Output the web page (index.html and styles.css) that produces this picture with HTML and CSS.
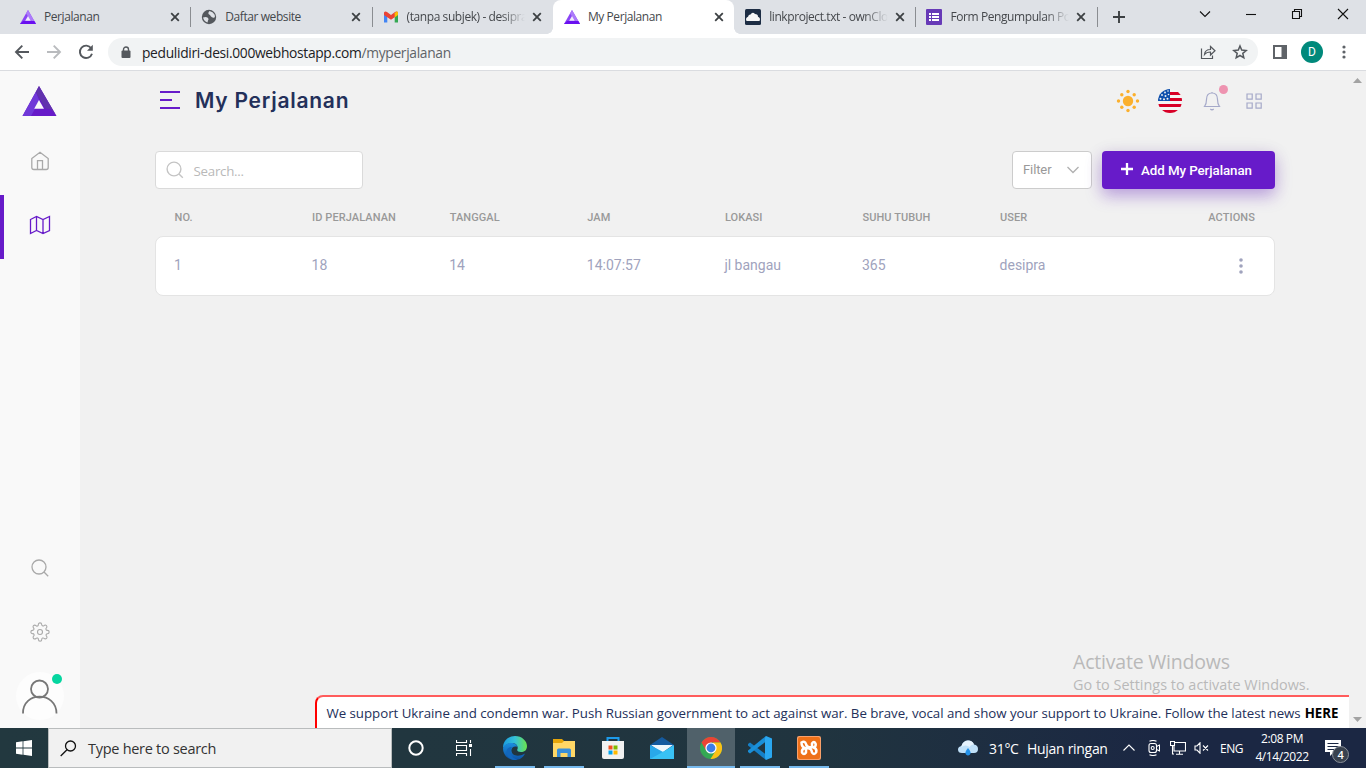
FILE: index.html
```html
<!DOCTYPE html>
<html lang="id">
<head>
<meta charset="utf-8">
<title>My Perjalanan</title>
<link rel="stylesheet" href="styles.css">
</head>
<body>
<svg width="0" height="0" class="defs">
  <defs>
    <symbol id="tri" viewBox="0 0 34 30"><path d="M16.500 0L34 30H0Z" fill="#671bc9"/><path d="M13.300 6L0 30H8.500L17 15Z" fill="#7038d8"/><path d="M16.500 0L34 30L29 23.500L22.500 22.500L13.300 6Z" fill="#6132ad"/><path d="M16.500 14L11.700 22.800H21.500Z" fill="#f9f9f9"/></symbol>
    <symbol id="tri-fav" viewBox="0 0 16 14"><path d="M8 0L16 14H0Z" fill="#8a45f5"/><path d="M8 0L16 14L10.500 10L6 3.500Z" fill="#ac7bfa"/><path d="M0 14L3 11H14.300L16 14Z" fill="#6a10f0"/><path d="M8 6L5.200 10.700H10.800Z" fill="#f1ecfb"/></symbol>
    <symbol id="x" viewBox="0 0 16 16"><path d="M4.200 4.200L11.800 11.800M11.800 4.200L4.200 11.800" stroke="#3c4043" stroke-width="1.800"/></symbol>
  </defs>
</svg>
<div class="screen">
  <header class="tabs">
    <div class="tab"><svg class="fav tri"><use href="#tri-fav"/></svg><span class="tab-title">Perjalanan</span><svg class="close"><use href="#x"/></svg></div>
    <div class="tab sep"><svg class="fav" viewBox="0 0 16 16"><circle cx="8" cy="8" r="7.200" fill="#54585d"/><path d="M2 8.500Q5 7.500 6.500 8.500Q8.500 10 7 11.500L6.500 13.500Q3 12.500 2 8.500ZM8.500 2Q6.500 4 8 5.500Q9.500 5.500 9.500 7Q11.500 9.500 13.500 8.500Q14.500 7.500 13.500 5.500Q12 2.500 8.500 2Z" fill="#dee1e6"/></svg><span class="tab-title">Daftar website</span><svg class="close"><use href="#x"/></svg></div>
    <div class="tab sep"><svg class="fav" viewBox="0 0 16 16"><path d="M1 4V13.500H4.300V7Z" fill="#4285f4"/><path d="M15 4V13.500H11.700V7Z" fill="#34a853"/><path d="M1 6V3.500Q2 2 4 3L8 6L12 3Q14 2 15 3.500L11.700 8.300L8 10.800L4.300 8.300Z" fill="#ea4335"/><path d="M11.700 4.200L13 2.700Q15 2.200 15 4V6L11.700 8.400Z" fill="#fbbc04"/></svg><span class="tab-title fade">(tanpa subjek) - desipra</span><svg class="close"><use href="#x"/></svg></div>
    <div class="tab active"><svg class="fav tri"><use href="#tri-fav"/></svg><span class="tab-title">My Perjalanan</span><svg class="close"><use href="#x"/></svg></div>
    <div class="tab"><svg class="fav" viewBox="0 0 16 16"><rect width="16" height="16" rx="1.500" fill="#1d2d44"/><path d="M1.500 12Q0 9 3 7.800Q3.500 5.500 5.500 5.500Q7.500 2.500 10 5Q13 5 13 7.800Q16 9 14.500 12Z" fill="#f7f7f7"/></svg><span class="tab-title fade">linkproject.txt - ownCloud</span><svg class="close"><use href="#x"/></svg></div>
    <div class="tab sep"><svg class="fav" viewBox="0 0 16 16"><rect width="16" height="16" rx="1" fill="#673ab7"/><path d="M3 4H5V6H3ZM3 7H5V9H3ZM3 10H5V12H3ZM6 4H13V6H6ZM6 7H13V9H6ZM6 10H13V12H6Z" fill="#fff"/></svg><span class="tab-title fade">Form Pengumpulan Portofolio</span><svg class="close"><use href="#x"/></svg></div>
    <div class="newtab sep"><svg width="14" height="14" viewBox="0 0 14 14"><path d="M7 1V13M1 7H13" stroke="#3c4043" stroke-width="1.900"/></svg></div>
    <div class="winbtns">
      <svg width="12" height="12" viewBox="0 0 12 12"><path d="M1 3.500L6 8.500L11 3.500"/></svg>
      <svg width="12" height="12" viewBox="0 0 12 12"><path d="M1 6.500H11"/></svg>
      <svg width="12" height="12" viewBox="0 0 12 12"><path d="M1.500 3.500H8.500V10.500H1.500ZM3.500 3.500V1.500H10.500V8.500H8.500"/></svg>
      <svg width="12" height="12" viewBox="0 0 12 12"><path d="M1 1L11 11M11 1L1 11"/></svg>
    </div>
  </header>
  <div class="toolbar">
    <svg width="16" height="16" viewBox="0 0 16 16" class="nav"><path d="M15 8H2M8.300 1.700L2 8L8.300 14.300"/></svg>
    <svg width="16" height="16" viewBox="0 0 16 16" class="nav off"><path d="M1 8H14M7.700 1.700L14 8L7.700 14.300"/></svg>
    <svg width="16" height="16" viewBox="0 0 16 16" class="nav"><path d="M13.200 4.300A6.200 6.200 0 1 0 14 9.800"/><path d="M14.800 .8V6.700H9Z" fill="#54585d" stroke="none"/></svg>
    <div class="omnibox">
      <svg width="10" height="13" viewBox="0 0 10 13"><rect x=".5" y="4.500" width="9" height="7.500" rx="1" fill="#54585d"/><path d="M2.500 5V3.500A2.500 2.500 0 0 1 7.500 3.500V5" fill="none" stroke="#54585d" stroke-width="1.400"/></svg>
      <span class="url">pedulidiri-desi.000webhostapp.com<span class="path">/myperjalanan</span></span>
      <svg width="16" height="16" viewBox="0 0 16 16" class="line"><path d="M1.500 4.500V14.500H12.500V11.500M4.500 10.500Q5 5.500 10.500 5.500V2.500L15 6.700L10.500 11V8Q6.500 8 4.500 10.500Z"/></svg>
      <svg width="16" height="16" viewBox="0 0 16 16" class="line star"><path d="M8 2L9.700 6.100L14.200 6.500L10.800 9.400L11.800 13.800L8 11.500L4.200 13.800L5.200 9.400L1.800 6.500L6.300 6.100Z"/></svg>
    </div>
    <svg width="14" height="14" viewBox="0 0 14 14" class="panel"><path d="M1 1H13V13H1Z" fill="none" stroke="#5f6368" stroke-width="2"/><path d="M8.500 0H14V14H8.500Z" fill="#5f6368"/></svg>
    <span class="profile">D</span>
    <svg width="4" height="14" viewBox="0 0 4 14" fill="#5f6368"><circle cx="2" cy="2" r="1.600"/><circle cx="2" cy="7" r="1.600"/><circle cx="2" cy="12" r="1.600"/></svg>
  </div>
  <div class="page">
    <aside class="sidebar">
      <svg class="logo" width="35" height="30"><use href="#tri"/></svg>
      <div class="side-item"><svg width="20" height="20" viewBox="0 0 20 20"><path d="M1.800 7.500L10 1.300L18.200 7.500V16.500Q18.200 18.500 16.200 18.500H3.800Q1.800 18.500 1.800 16.500ZM7.500 18.300V9.700H12.500V18.300"/></svg></div>
      <div class="side-item current"><svg width="22" height="20" viewBox="0 0 22 20"><path d="M1.500 4.500L7.500 1.500L14 4.500L20.500 1.500V15.500L14 18.500L7.500 15.500L1.500 18.500ZM7.500 1.500V15.500M14 4.500V18.500"/></svg></div>
      <div class="side-bottom">
        <div class="side-item"><svg width="18" height="18" viewBox="0 0 18 18"><circle cx="8" cy="8" r="7"/><path d="M13 13L17.200 17.200"/></svg></div>
        <div class="side-item"><svg width="20" height="20" viewBox="0 0 24 24"><circle cx="12" cy="12" r="3"/><path d="M19.400 15a1.650 1.650 0 0 0 .33 1.820l.06.060a2 2 0 1 1-2.830 2.830l-.06-.06a1.650 1.650 0 0 0-2.800 1.170V21a2 2 0 0 1-4 0v-.09a1.650 1.650 0 0 0-2.900-1.170l-.06.060a2 2 0 1 1-2.830-2.830l.06-.06A1.650 1.650 0 0 0 3.200 14H3a2 2 0 0 1 0-4h.09A1.650 1.650 0 0 0 4.300 7.200l-.06-.06a2 2 0 1 1 2.830-2.830l.06.060A1.650 1.650 0 0 0 10 3.200V3a2 2 0 0 1 4 0v.09a1.650 1.650 0 0 0 2.800 1.210l.06-.06a2 2 0 1 1 2.830 2.830l-.06.060A1.650 1.650 0 0 0 20.800 10H21a2 2 0 0 1 0 4h-.09a1.650 1.650 0 0 0-1.510 1z"/></svg></div>
        <div class="user"><svg width="48" height="48" viewBox="0 0 48 48"><circle cx="24" cy="24" r="24" fill="#fdfdfd"/><g fill="none" stroke="#777" stroke-width="1.800"><circle cx="23.500" cy="17" r="8.500"/><path d="M7 41.500C6.500 19 40.500 19 40.500 41.500"/></g></svg><i class="online"></i></div>
      </div>
    </aside>
    <main class="main">
      <div class="head">
        <svg width="20" height="18" viewBox="0 0 20 18" class="burger"><path d="M0 1H20M0 9H12M0 17H20"/></svg>
        <h1>My Perjalanan</h1>
        <svg width="24" height="24" viewBox="0 0 24 24" fill="#fbb02d"><circle cx="12" cy="12" r="5.200"/><circle cx="12" cy="2.500" r="1.700"/><circle cx="12" cy="21.500" r="1.700"/><circle cx="2.500" cy="12" r="1.700"/><circle cx="21.500" cy="12" r="1.700"/><circle cx="5.800" cy="5.800" r="1.700"/><circle cx="18.200" cy="5.800" r="1.700"/><circle cx="5.800" cy="18.200" r="1.700"/><circle cx="18.200" cy="18.200" r="1.700"/></svg>
        <svg width="24" height="24" viewBox="0 0 24 24"><clipPath id="fc"><circle cx="12" cy="12" r="12"/></clipPath><g clip-path="url(#fc)"><path d="M0 0H24V24H0Z" fill="#f4f4f4"/><path d="M12 3H24V6H12ZM12 9H24V12H12ZM0 15H24V18H0ZM0 21H24V24H0Z" fill="#d80027"/><path d="M0 0H12V12H0Z" fill="#0f50ad"/><g fill="#f4f4f4"><circle cx="4" cy="6" r=".9"/><circle cx="7" cy="3.500" r=".9"/><circle cx="10" cy="2" r=".8"/><circle cx="7.500" cy="7" r="1"/><circle cx="10.500" cy="5.500" r=".8"/><circle cx="2.500" cy="9.800" r="1"/><circle cx="6" cy="10.200" r="1"/><circle cx="9.500" cy="9.800" r="1"/></g></g></svg>
        <div class="bell"><svg width="24" height="24" viewBox="0 0 24 24" class="soft"><path d="M4.500 17.500Q6.500 15 6.500 10.500Q6.500 4 12 4Q17.500 4 17.500 10.500Q17.500 15 19.500 17.500ZM10.300 20Q12 21.500 13.700 20M12 4V3"/></svg><i></i></div>
        <svg width="24" height="24" viewBox="0 0 24 24" class="soft"><path d="M5 5H10.200V10.200H5ZM14 5H19.200V10.200H14ZM5 14H10.200V19.200H5ZM14 14H19.200V19.200H14Z"/></svg>
      </div>
      <div class="controls">
        <div class="search"><svg width="18" height="18" viewBox="0 0 18 18"><circle cx="8" cy="8" r="6.900"/><path d="M13 13L16.800 16.800"/></svg><span>Search...</span></div>
        <div class="filter"><span>Filter</span><svg width="14" height="10" viewBox="0 0 14 10"><path d="M1.500 2L7 7.500L12.500 2"/></svg></div>
        <div class="add"><svg width="12" height="12" viewBox="0 0 12 12"><path d="M6 0V12M0 6H12" stroke="#fff" stroke-width="2.300"/></svg><span>Add My Perjalanan</span></div>
      </div>
      <div class="row labels"><span>NO.</span><span>ID PERJALANAN</span><span>TANGGAL</span><span>JAM</span><span>LOKASI</span><span>SUHU TUBUH</span><span>USER</span><span class="end">ACTIONS</span></div>
      <div class="row card"><span>1</span><span>18</span><span>14</span><span>14:07:57</span><span>jl bangau</span><span>365</span><span>desipra</span><span class="end"><svg width="4" height="16" viewBox="0 0 4 16" fill="#a0a3bd"><circle cx="2" cy="2" r="1.800"/><circle cx="2" cy="8" r="1.800"/><circle cx="2" cy="14" r="1.800"/></svg></span></div>
    </main>
    <div class="scrollbar"><svg width="9" height="5"><path d="M0 5L4.500 0L9 5Z"/></svg><svg width="9" height="5"><path d="M0 0L4.500 5L9 0Z"/></svg></div>
    <div class="watermark"><div class="w1">Activate Windows</div><div class="w2">Go to Settings to activate Windows.</div></div>
    <div class="banner"><span>We support Ukraine and condemn war. Push Russian government to act against war. Be brave, vocal and show your support to Ukraine. Follow the latest news</span><b>HERE</b></div>
  </div>
  <footer class="taskbar">
    <div class="start"><svg width="16" height="16" viewBox="0 0 16 16" fill="#fff"><path d="M0 2.300L6.600 1.300V7.600H0ZM7.400 1.200L16 0V7.600H7.400ZM0 8.400H6.600V14.700L0 13.700ZM7.400 8.400H16V16L7.400 14.800Z"/></svg></div>
    <div class="tsearch"><svg width="17" height="17" viewBox="0 0 17 17" fill="none" stroke="#111" stroke-width="1.300"><circle cx="10.500" cy="6" r="5"/><path d="M7 9.700L.7 16"/></svg><span>Type here to search</span></div>
    <div class="apps">
      <div class="app"><svg width="16" height="16" viewBox="0 0 16 16"><circle cx="8" cy="8" r="6.700" fill="none" stroke="#fff" stroke-width="2"/></svg></div>
      <div class="app tv"><svg width="16" height="16" viewBox="0 0 16 16" fill="none" stroke="#fff" stroke-width="1.100"><path d="M.5 0V2.500H10.500V0M.5 16V13.500H10.500V16M.5 5.500H10.500V10.500H.5ZM14.500 0V3M14.500 9V16"/><path d="M13 4H16V7H13Z" fill="#fff" stroke="none"/></svg></div>
      <div class="app open"><svg width="24" height="24" viewBox="0 0 24 24"><defs><linearGradient id="eg" x1="0" x2="1"><stop offset="0" stop-color="#1a9be0"/><stop offset=".5" stop-color="#35c1d8"/><stop offset="1" stop-color="#6be34c"/></linearGradient><linearGradient id="eb" x1="0" y1="0" x2="0" y2="1"><stop offset="0" stop-color="#1b8fdf"/><stop offset="1" stop-color="#0d52a5"/></linearGradient></defs><path d="M0 12C0 4 6 0 12 0C19 0 24 5 24 10C24 14.500 21 16 18 16C15 16 13.500 15 14.500 13C15.500 10 13 7 9 7C4 7 1 10 0 12Z" fill="url(#eg)"/><path d="M0 12C1 8.500 4.500 7 8 7C12 7 14 9 14.500 11C11 9.500 8 12 8.500 15C9 19.500 15 21.500 22 17.500C20 22 16 24 12 24C5 24 0 19 0 12Z" fill="url(#eb)"/><path d="M9 11C6 15 8 22 14 23.700C8 25 3 20 3.500 15.500C4 12 6.500 11 9 11Z" fill="#1267bd"/></svg></div>
      <div class="app open"><svg width="22" height="20" viewBox="0 0 22 20"><path d="M0 1H9L11 3H22V19H0Z" fill="#e5a50a"/><path d="M0 5H9L11 3H22V19H0Z" fill="#ffd766"/><path d="M4 12Q4 10.500 5.500 10.500H16.500Q18 10.500 18 12V19H14.500V15H7.500V19H4Z" fill="#3a8fd9"/></svg></div>
      <div class="app"><svg width="24" height="24" viewBox="0 0 24 24"><path d="M6.500 6V2H17.500V6" fill="none" stroke="#1d9bea" stroke-width="2"/><path d="M1 5H23V21Q23 23 21 23H3Q1 23 1 21Z" fill="#f1f1f1"/><path d="M7.500 9.500H11.500V13.500H7.500Z" fill="#f25022"/><path d="M12.500 9.500H16.500V13.500H12.500Z" fill="#7fba00"/><path d="M7.500 14.500H11.500V18.500H7.500Z" fill="#00a4ef"/><path d="M12.500 14.500H16.500V18.500H12.500Z" fill="#ffb900"/></svg></div>
      <div class="app"><svg width="24" height="24" viewBox="0 0 24 24"><path d="M0 9L12 1L24 9V12H0Z" fill="#155a9e"/><path d="M1 9H23L12 17Z" fill="#eef6fb"/><path d="M0 9L15 17L24 23H0Z" fill="#29a8ea"/><path d="M24 9L11 17L0 23H24Z" fill="#39c1f5"/></svg></div>
      <div class="app open sel"><svg width="22" height="22" viewBox="0 0 22 22"><circle cx="11" cy="11" r="11" fill="#34a853"/><path d="M1.500 5.500A11 11 0 0 1 20.500 5.500H11L6.200 13.800Z" fill="#ea4335"/><path d="M20.500 5.500A11 11 0 0 1 10.500 22L15.800 13.500L13 5.500Z" fill="#fbc116"/><circle cx="11" cy="11" r="5.600" fill="#fff"/><circle cx="11" cy="11" r="4.400" fill="#3c7de8"/></svg></div>
      <div class="app open"><svg width="24" height="24" viewBox="0 0 24 24"><path d="M0 8L2 6.500L18 18.500V24L0 9.500Z" fill="#1580c8"/><path d="M0 16L2 17.500L18 5.500V0L0 14.500Z" fill="#1a8fd8"/><path d="M18 0L24 2.500V21.500L18 24L17 22V2Z" fill="#2aa7f0"/></svg></div>
      <div class="app open"><svg width="24" height="24" viewBox="0 0 24 24"><rect width="24" height="24" rx="2" fill="#f9a06a"/><rect x="1" y="1" width="22" height="22" rx="2" fill="#ee7018"/><g fill="none" stroke="#fff" stroke-width="2.500" stroke-linejoin="round" stroke-linecap="round"><path d="M4.500 6.500Q8 4.500 9 8Q9.500 11 12.500 11.200H16.500Q19.500 10.500 18.500 7.500Q17 4.500 15 7.500V11M16.500 11.500Q20 12.500 19.300 16Q17.500 19.500 15 16.500Q14.500 12.500 11 12.300H7.500Q4.500 13 5 16.500Q7 19.500 9 16.500V13M4.500 6.500Q4.500 11 8 12"/></g></svg></div>
    </div>
    <div class="tray">
      <svg width="22" height="18" viewBox="0 0 22 18" class="weather"><path d="M5 14Q1 14 1 10.500Q1 7.500 4.500 7Q6 1.500 11 1.500Q15.500 1.500 17 5.500Q21 6 21 10Q21 14 17 14Z" fill="#bfe0f8"/><path d="M4 8Q6 1.500 11 1.500Q15.500 1.500 17 5.500Q14 5 12.500 8Q9 5 4 8Z" fill="#e5f2fc"/><path d="M11 9Q15 13.500 13 15.500Q11 17.500 9 15.500Q7 13.500 11 9Z" fill="#2391e8"/></svg>
      <span class="temp">31°C</span><span class="cond">Hujan ringan</span>
      <svg width="12" height="8" viewBox="0 0 12 8" class="tl caret"><path d="M.5 6.500L6 1L11.500 6.500"/></svg>
      <svg width="12" height="16" viewBox="0 0 12 16" class="tl cam"><path d="M3 3.500H6.500Q8.500 3.500 8.500 5.500V10.500Q8.500 12.500 6.500 12.500H3Q1 12.500 1 10.500V5.500Q1 3.500 3 3.500ZM8.500 6.500L11.500 5V11L8.500 9.500M1.500 1.300Q5 -.3 8.500 1.300M1.500 14.700Q5 16.300 8.500 14.700"/><circle cx="4.700" cy="8" r="1.500"/></svg>
      <svg width="16" height="14" viewBox="0 0 16 14" class="tl net"><path d="M5 1.500H15.500V10H4V5M9.500 10V13M6 13.200H13M.5 .5H4.500V4.500H.5ZM2.500 4.500V13H4"/></svg>
      <svg width="16" height="12" viewBox="0 0 16 12" class="tl vol"><path d="M1 4H3L6 .8V11.200L3 8H1ZM9 3.500L14 8.500M14 3.500L9 8.500"/></svg>
      <span class="lang">ENG</span>
      <div class="clock"><span>2:08 PM</span><span>4/14/2022</span></div>
      <div class="notif"><svg width="16" height="16" viewBox="0 0 16 16"><path d="M0 0H16V12H9L5 16V12H0Z" fill="#fff"/><path d="M2.500 3.500H13.500M2.500 6.500H13.500M2.500 9.500H9" stroke="#1b2743"/></svg><b>4</b></div>
    </div>
  </footer>
</div>
</body>
</html>
```
FILE: styles.css
```css
* { box-sizing: border-box; }
body { margin: 0; font-family: "Open Sans", "Noto Sans", sans-serif; }
svg { display: block; flex: none; }
.defs { position: absolute; }
.screen { width: 1366px; height: 768px; overflow: hidden; display: flex; flex-direction: column; background: #f1f1f1; white-space: nowrap; }

.tabs { height: 34px; background: #dee1e6; display: flex; padding-left: 9px; flex: none; }
.tab { width: 181.3px; display: flex; align-items: center; padding: 0 7.5px 0 11px; position: relative; flex: none; }
.tab.active { background: #fff; border-radius: 8px 8px 0 0; }
.tab.active::before, .tab.active::after { content: ""; position: absolute; bottom: 0; width: 6px; height: 6px; }
.tab.active::before { left: -6px; background: radial-gradient(circle at 0 0, transparent 5.5px, #fff 6px); }
.tab.active::after { right: -6px; background: radial-gradient(circle at 100% 0, transparent 5.5px, #fff 6px); }
.sep { background: linear-gradient(#8a8d91, #8a8d91) 0 7px / 1px 20px no-repeat; }
.fav { width: 16px; height: 16px; margin-right: 8px; }
.fav.tri { height: 14px; }
.tab-title { flex: 1; min-width: 0; overflow: hidden; font-size: 12px; letter-spacing: -.42px; color: #45484c; line-height: 20px; margin-right: 4px; }
.fade { -webkit-mask-image: linear-gradient(90deg, #000 80%, transparent); mask-image: linear-gradient(90deg, #000 80%, transparent); }
.close { width: 16px; height: 16px; }
.newtab { width: 44px; display: flex; align-items: center; justify-content: center; }
.winbtns { margin-left: auto; display: flex; gap: 34px; padding: 8px 17px 0 0; fill: none; stroke: #111; stroke-width: 1.1; }

.toolbar { height: 37px; background: #fff; border-bottom: 1px solid #dadce0; display: flex; align-items: center; padding-left: 14px; flex: none; }
.nav { fill: none; stroke: #54585d; stroke-width: 1.9; margin-right: 16px; }
.nav.off { stroke: #b9bbbe; }
.toolbar .nav:nth-child(3) { margin-right: 14px; }
.omnibox { width: 1150px; height: 28px; border-radius: 14px; background: #f1f3f4; display: flex; align-items: center; padding: 0 10px 0 13px; }
.url { flex: 1; margin-left: 11px; font-size: 13.8px; letter-spacing: -.32px; color: #202124; }
.path { color: #5f6368; }
.line { fill: none; stroke: #54585d; stroke-width: 1.2; }
.star { margin-left: 16px; stroke-width: 1.5; }
.panel { margin-left: 15px; }
.profile { width: 22px; height: 22px; border-radius: 50%; background: #00897b; color: #fff; font: 12px/22px Roboto, sans-serif; text-align: center; margin: 0 19px 0 14px; }

.page { flex: 1; display: flex; min-height: 0; position: relative; }
.sidebar { width: 80px; background: #f9f9f9; display: flex; flex-direction: column; align-items: center; }
.logo { margin: 15px 1px 13px 0; }
.side-item { width: 80px; height: 64px; display: flex; align-items: center; justify-content: center; fill: none; stroke: #a9a9a9; stroke-width: 1.3; }
.logo + .side-item { height: 66px; padding-bottom: 2px; }
.side-item.current { border-left: 4px solid #671bc9; border-radius: 0 2px 2px 0; padding: 0 4px 4px 0; stroke: #671bc9; }
.side-bottom { margin-top: auto; }
.user { height: 64px; display: flex; justify-content: center; padding-top: 8px; position: relative; }
.online { position: absolute; left: 52px; top: 10px; width: 10px; height: 10px; border-radius: 50%; background: #06d6a0; }
.main { width: 1269px; padding: 0 74px 0 75px; }
.head { height: 60px; display: flex; align-items: center; padding: 0 9px 0 5px; gap: 18px; }
.burger { stroke: #671bc9; stroke-width: 2; margin-top: -2px; }
h1 { margin: 0 auto 0 -3px; font: 600 21px/30px Inter, sans-serif; letter-spacing: .75px; color: #23305a; }
.soft { fill: none; stroke: #a5a9c9; stroke-width: 1.2; }
.bell { position: relative; }
.bell i { position: absolute; right: -4px; top: -4px; width: 9px; height: 9px; border-radius: 50%; background: #ee93b0; }
.controls { display: flex; margin-top: 20px; height: 38px; }
.search { width: 208px; border: 1px solid #dadada; border-radius: 4px; background: #fff; display: flex; align-items: center; padding-left: 10px; gap: 10px; fill: none; stroke: #c4c4c4; stroke-width: 1.4; font-size: 13.3px; letter-spacing: -.25px; color: #b9b9b9; }
.search svg { margin-left: -.5px; }
.search span { padding-top: 2px; }
.filter { width: 80px; margin-left: auto; border: 1px solid #ccc; border-radius: 4px; background: #fff; display: flex; align-items: center; justify-content: space-between; padding: 0 11px 0 10px; font: 13px Roboto, sans-serif; letter-spacing: -.1px; color: #999; fill: none; stroke: #b0b0b0; stroke-width: 1.3; }
.filter span { margin-top: -1px; }
.add { width: 173px; margin-left: 10px; border-radius: 4px; background: #671bc9; color: #fff; display: flex; align-items: center; padding-left: 19px; gap: 8px; font: 500 13.33px Roboto, sans-serif; letter-spacing: -.07px; box-shadow: 0 7px 16px rgba(103,27,201,.34), 0 2px 20px rgba(0,0,0,.07); }
.add svg { margin-top: -2px; }
.row { display: grid; grid-template-columns: repeat(7, 137.6px) 1fr; align-items: center; font-family: Roboto, sans-serif; }
.labels { height: 47px; padding: 10px 20px 0 19.500px; font-size: 11px; font-weight: 500; letter-spacing: .08px; color: #999; }
.card { height: 60px; border: 1px solid #e4e4e4; border-radius: 8px; background: #fff; padding: 0 31px 2px 18px; font-size: 14px; color: #a0a3bd; }
.end { justify-self: end; }
.card .end { padding-top: 1px; }
.scrollbar { width: 17px; display: flex; flex-direction: column; justify-content: space-between; align-items: center; padding: 7px 0 6px; fill: #a3a3a3; }
.watermark { position: absolute; left: 1073px; top: 577px; color: #b9b9b9; }
.w1 { font-size: 19.5px; line-height: 27px; letter-spacing: -.2px; }
.w2 { font-size: 14.4px; line-height: 19px; letter-spacing: .02px; }
.banner { position: absolute; left: 315px; right: 17px; bottom: 0; height: 33px; border: 2px solid #ff5c5c; border-left-color: #f00; border-right: 0; border-bottom: 0; border-radius: 8px 0 0 0; background: #fff; padding-left: 9.5px; display: flex; gap: 4px; font-size: 13.3px; line-height: 33px; letter-spacing: -.04px; color: #23305a; }
.banner b { color: #000; }

.taskbar { height: 40px; flex: none; display: flex; background: linear-gradient(90deg, #22383f, #20343f 60%, #1b2743 85%); color: #fff; }
.start { width: 48px; display: flex; align-items: center; justify-content: center; }
.tsearch { width: 344px; background: #f1f1f1; border: 1px solid #b9bcbd; display: flex; align-items: center; padding-left: 11px; gap: 11px; font-size: 14.5px; letter-spacing: -.28px; color: #333; }
.apps { display: flex; gap: 1px; }
.app { width: 48px; display: flex; align-items: center; justify-content: center; }
.app.tv { width: 49px; padding-right: 3px; }
.open { background: linear-gradient(#76b9ed, #76b9ed) 4px 38px / 40px 2px no-repeat; }
.open.sel { background: linear-gradient(#76b9ed, #76b9ed) 0 38px / 48px 2px no-repeat, #50616a; }
.tray { margin-left: auto; display: flex; align-items: center; font-size: 14px; letter-spacing: -.3px; }
.weather { margin-right: 10px; }
.temp { width: 38px; }
.cond { width: 96px; }
.tl { fill: none; stroke: #fff; stroke-width: 1.1; }
.cam { margin-left: 13px; }
.net { margin-left: 10px; }
.vol { margin-left: 8px; }
.lang { margin-left: 10px; width: 26px; font-size: 12px; letter-spacing: -.5px; }
.clock { width: 72px; display: flex; flex-direction: column; align-items: center; font-size: 12px; line-height: 18px; letter-spacing: -.4px; margin-right: 7px; }
.notif { position: relative; width: 41px; }
.notif b { position: absolute; left: 7px; top: 6px; width: 17px; height: 17px; border-radius: 50%; background: #39424f; border: 1px solid #8a9099; font-size: 11px; line-height: 15px; text-align: center; font-weight: 600; }
```
